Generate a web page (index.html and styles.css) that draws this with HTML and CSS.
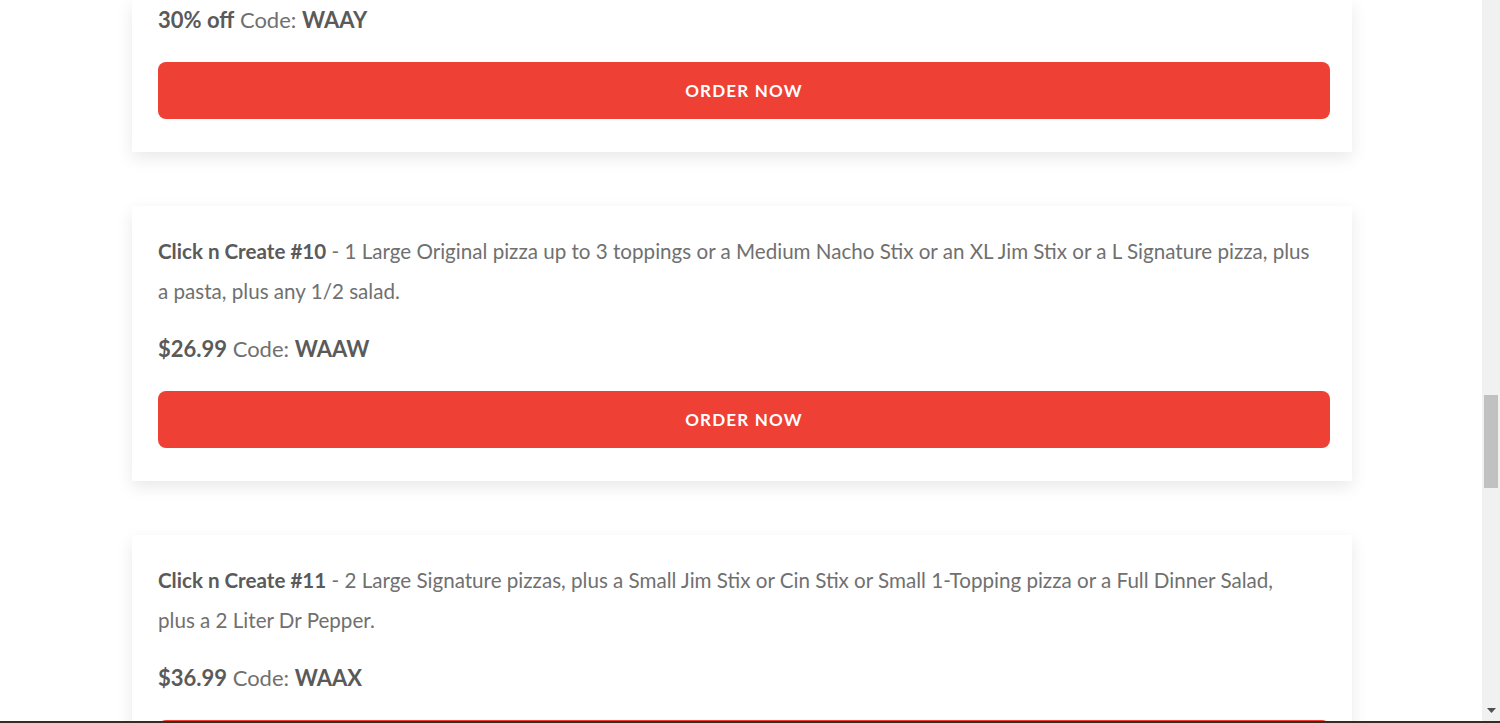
FILE: index.html
```html
<!DOCTYPE html>
<html>
<head>
  <meta charset="UTF-8">
  <meta name="viewport" content="width=device-width, initial-scale=1.0">
  <title>Deals</title>
  <link rel="stylesheet" href="styles.css">
</head>
<body>
  <div class="deals">
    <div class="deal deal-cut">
      <p class="price"><strong>30% off</strong> Code: <strong>WAAY</strong></p>
      <a class="order" href="#">Order Now</a>
    </div>

    <div class="deal">
      <p class="desc"><strong>Click n Create #10</strong> - 1 Large Original pizza up to 3 toppings or a Medium Nacho Stix or an XL Jim Stix or a L Signature pizza, plus a pasta, plus any 1/2 salad.</p>
      <p class="price"><strong>$26.99</strong> Code: <strong>WAAW</strong></p>
      <a class="order" href="#">Order Now</a>
    </div>

    <div class="deal">
      <p class="desc"><strong>Click n Create #11</strong> - 2 Large Signature pizzas, plus a Small Jim Stix or Cin Stix or Small 1-Topping pizza or a Full Dinner Salad, plus a 2 Liter Dr Pepper.</p>
      <p class="price"><strong>$36.99</strong> Code: <strong>WAAX</strong></p>
      <a class="order" href="#">Order Now</a>
    </div>
  </div>

  <!-- page scrollbar, drawn since the headless browser hides it -->
  <div class="scrollbar">
    <div class="thumb"></div>
    <svg class="arrow" width="9" height="5" viewBox="0 0 9 5"><path d="M0 0h9L4.5 5z" fill="#505050"/></svg>
  </div>
  <div class="frame-edge"></div>
</body>
</html>
```

FILE: styles.css
```css
body {
  margin: 0;
  background: #fff;
  font-family: Lato, "Source Sans Pro", sans-serif;
  color: #707070;
  overflow: hidden;
}
.deals {
  width: 1220px;
  margin-left: 132px;
  display: flex;
  flex-direction: column;
  gap: 54px;
  padding-bottom: 60px;
}
.deal {
  background: #fff;
  padding: 25px 22px 33px 26px;
  box-shadow: 0 6px 16px rgba(0, 0, 0, 0.09);
}
.deal-cut {
  padding-top: 0;
}
.deal p {
  margin: 0;
}
.deal strong {
  color: #5a5a5a;
}
.desc {
  font-size: 20.6px;
  line-height: 40px;
  padding-right: 18px;
  margin-bottom: 18px !important;
}
.price {
  font-size: 22px;
  line-height: 40px;
  margin-bottom: 22px !important;
}
.order {
  display: block;
  height: 57px;
  line-height: 57px;
  background: #ef4036;
  border-radius: 8px;
  color: #fff;
  text-align: center;
  text-transform: uppercase;
  text-decoration: none;
  font-weight: 700;
  font-size: 17px;
  letter-spacing: 1.2px;
}

.scrollbar {
  position: fixed;
  top: 0;
  right: 0;
  width: 18px;
  height: 100%;
  background: #f1f1f1;
}
.thumb {
  position: absolute;
  top: 395px;
  left: 2px;
  width: 14px;
  height: 93px;
  background: #c1c1c1;
}
.arrow {
  position: absolute;
  bottom: 10px;
  left: 5px;
}
.frame-edge {
  position: fixed;
  left: 0;
  right: 0;
  bottom: 0;
  height: 2px;
  background: #3b2a20;
}
```
